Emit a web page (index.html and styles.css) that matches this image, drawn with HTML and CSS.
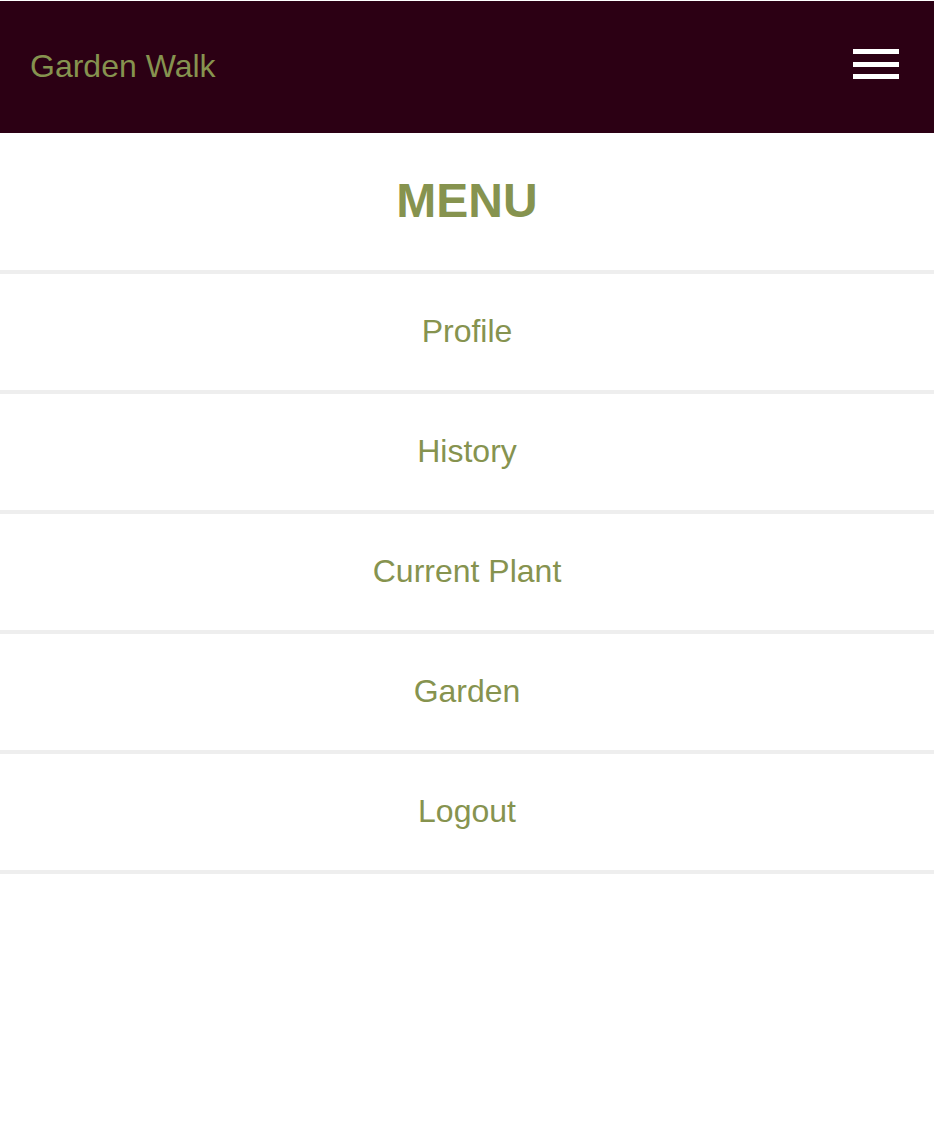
FILE: index.html
```html
<!DOCTYPE html>
<html lang="en">
<head>
<meta charset="utf-8">
<title>Garden Walk</title>
<link rel="stylesheet" href="styles.css">
</head>
<body>
<header class="topbar">
  <span class="brand">Garden Walk</span>
  <button class="burger" aria-label="Menu">
    <span class="bar"></span>
    <span class="bar"></span>
    <span class="bar"></span>
  </button>
</header>
<main>
  <h1 class="menu-title">MENU</h1>
  <nav class="menu-list">
    <a class="menu-item" href="#">Profile</a>
    <a class="menu-item" href="#">History</a>
    <a class="menu-item" href="#">Current Plant</a>
    <a class="menu-item" href="#">Garden</a>
    <a class="menu-item" href="#">Logout</a>
  </nav>
</main>
</body>
</html>
```
FILE: styles.css
```css
html, body {
  margin: 0;
  padding: 0;
  background: #ffffff;
}
body {
  font-family: "Liberation Sans", Arial, Helvetica, sans-serif;
  color: #86934f;
  padding-top: 1px;
}
.topbar {
  height: 132px;
  background: #2c0014;
  display: flex;
  align-items: center;
  justify-content: space-between;
  padding: 0 35px 0 30px;
  box-sizing: border-box;
}
.brand {
  font-size: 32px;
  color: #86934f;
  line-height: 1;
  margin-top: -3px;
}
.burger {
  background: none;
  border: 0;
  padding: 0;
  width: 46px;
  display: flex;
  flex-direction: column;
  gap: 7.5px;
  margin-top: -6px;
  cursor: pointer;
}
.bar {
  display: block;
  width: 46px;
  height: 5px;
  background: #ffffff;
}
.menu-title {
  margin: 0;
  height: 141px;
  display: flex;
  align-items: center;
  justify-content: center;
  font-size: 48px;
  font-weight: bold;
  border-bottom: 4px solid #eeeeee;
  box-sizing: border-box;
  padding-bottom: 2px;
  color: #86934f;
}
.menu-list {
  display: flex;
  flex-direction: column;
}
.menu-item {
  height: 120px;
  box-sizing: border-box;
  border-bottom: 4px solid #eeeeee;
  display: flex;
  align-items: center;
  justify-content: center;
  font-size: 32px;
  color: #86934f;
  text-decoration: none;
  padding-bottom: 2px;
}
```
